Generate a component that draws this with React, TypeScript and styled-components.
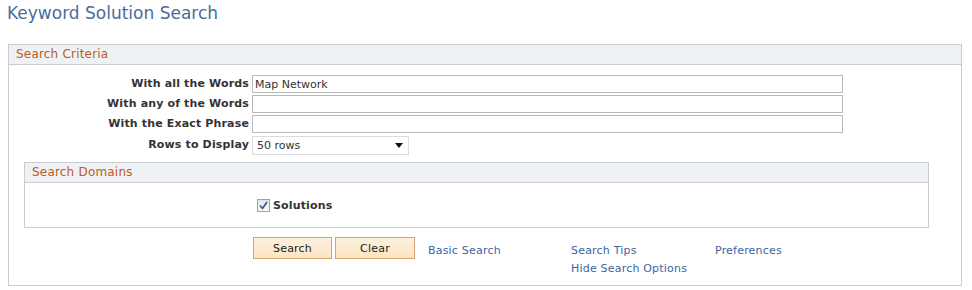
import React from 'react';
import styled, { createGlobalStyle } from 'styled-components';

const fields = ['With all the Words', 'With any of the Words', 'With the Exact Phrase'];
const values = ['Map Network', '', ''];

const GlobalStyle = createGlobalStyle`
  body {
    margin: 0;
    background: #ffffff;
    font-family: "DejaVu Sans", Verdana, sans-serif;
    font-size: 11px;
    color: #333333;
  }
`;

const Page = styled.div`
  width: 972px;
  height: 290px;
  padding: 0 0 0 8px;
  box-sizing: border-box;
`;

const Title = styled.h1`
  margin: 0;
  padding: 3px 0 0 0;
  margin-left: -1px;
  height: 44px;
  box-sizing: border-box;
  font-size: 17px;
  font-weight: normal;
  color: #4d6b9a;
`;

const Box = styled.div<{ $width: number }>`
  width: ${(p) => p.$width}px;
  border: 1px solid #c9cdd2;
  border-top: 0;
  box-sizing: border-box;
  background: #fff;
`;

const Header = styled.div`
  height: 19px;
  background: #eef2f4;
  border-top: 1px solid #c9cdd2;
  border-bottom: 1px solid #c9cdd2;
  padding-left: 7px;
  font-size: 12px;
  letter-spacing: 0.2px;
  line-height: 18px;
  color: #c0591f;
`;

const Body = styled.div`
  padding: 10px 0 0 0;
  height: 220px;
  box-sizing: border-box;
`;

const Grid = styled.div`
  display: grid;
  grid-template-columns: 240px auto;
  column-gap: 3px;
  row-gap: 2px;
  align-items: center;
`;

const Label = styled.label`
  text-align: right;
  font-weight: bold;
  letter-spacing: 0.15px;
  color: #333;
  line-height: 18px;
`;

const Input = styled.input`
  width: 591px;
  height: 18px;
  box-sizing: border-box;
  border: 1px solid #b8b8b8;
  padding: 0 2px;
  font-family: inherit;
  font-size: 11px;
  color: #333;
  outline: none;
  margin: 0;
`;

const Select = styled.div`
  width: 157px;
  height: 19px;
  box-sizing: border-box;
  border: 1px solid #dcdcdc;
  margin-top: 1px;
  padding-left: 4px;
  display: flex;
  align-items: center;
  justify-content: space-between;
  color: #333;
`;

const Arrow = styled.span`
  width: 0;
  height: 0;
  border-left: 4px solid transparent;
  border-right: 4px solid transparent;
  border-top: 5px solid #111;
  margin-right: 5px;
`;

const Domains = styled.div`
  margin: 7px 0 0 15px;
`;

const DomainBody = styled.div`
  height: 44px;
  display: flex;
  align-items: center;
  padding: 0 0 0 232px;
  box-sizing: border-box;
`;

const Check = styled.span`
  width: 13px;
  height: 13px;
  box-sizing: border-box;
  border: 1px solid #9aa3ad;
  background: linear-gradient(#e3e7ec, #f7f8fa);
  display: inline-flex;
  align-items: center;
  justify-content: center;
  margin-right: 3px;
`;

const CheckLabel = styled.span`
  font-weight: bold;
  letter-spacing: 0.15px;
  color: #333;
`;

const Actions = styled.div`
  display: grid;
  grid-template-columns: 82px 93px 143px 144px auto;
  margin: 9px 0 0 244px;
`;

const Button = styled.button<{ $w: number }>`
  width: ${(p) => p.$w}px;
  height: 22px;
  border: 1px solid #d9a46f;
  background: linear-gradient(#fdf1dd, #fbe5c3);
  font-family: inherit;
  font-size: 11px;
  letter-spacing: 0.2px;
  color: #222;
  padding: 0;
  margin: 0;
`;

const LinkCol = styled.div`
  display: flex;
  flex-direction: column;
  padding-top: 5px;
  line-height: 18px;
`;

const Link = styled.a`
  color: #3d64a3;
  text-decoration: none;
  font-size: 11px;
  letter-spacing: 0.2px;
`;

export default function App() {
  return (
    <>
      <GlobalStyle />
      <Page>
        <Title>Keyword Solution Search</Title>
        <Box $width={954}>
          <Header>Search Criteria</Header>
          <Body>
            <Grid>
              {fields.map((f, i) => (
                <React.Fragment key={f}>
                  <Label>{f}</Label>
                  <Input defaultValue={values[i]} />
                </React.Fragment>
              ))}
              <Label>Rows to Display</Label>
              <Select>
                50 rows
                <Arrow />
              </Select>
            </Grid>
            <Domains>
              <Box $width={905}>
                <Header>Search Domains</Header>
                <DomainBody>
                  <Check>
                    <svg width="9" height="9" viewBox="0 0 9 9">
                      <path d="M1 4.5 L3.5 7.5 L8 1" fill="none" stroke="#2f4f8f" strokeWidth="1.6" />
                    </svg>
                  </Check>
                  <CheckLabel>Solutions</CheckLabel>
                </DomainBody>
              </Box>
            </Domains>
            <Actions>
              <div><Button $w={79}>Search</Button></div>
              <div><Button $w={80}>Clear</Button></div>
              <LinkCol><Link href="#">Basic Search</Link></LinkCol>
              <LinkCol>
                <Link href="#">Search Tips</Link>
                <Link href="#">Hide Search Options</Link>
              </LinkCol>
              <LinkCol><Link href="#">Preferences</Link></LinkCol>
            </Actions>
          </Body>
        </Box>
      </Page>
    </>
  );
}
